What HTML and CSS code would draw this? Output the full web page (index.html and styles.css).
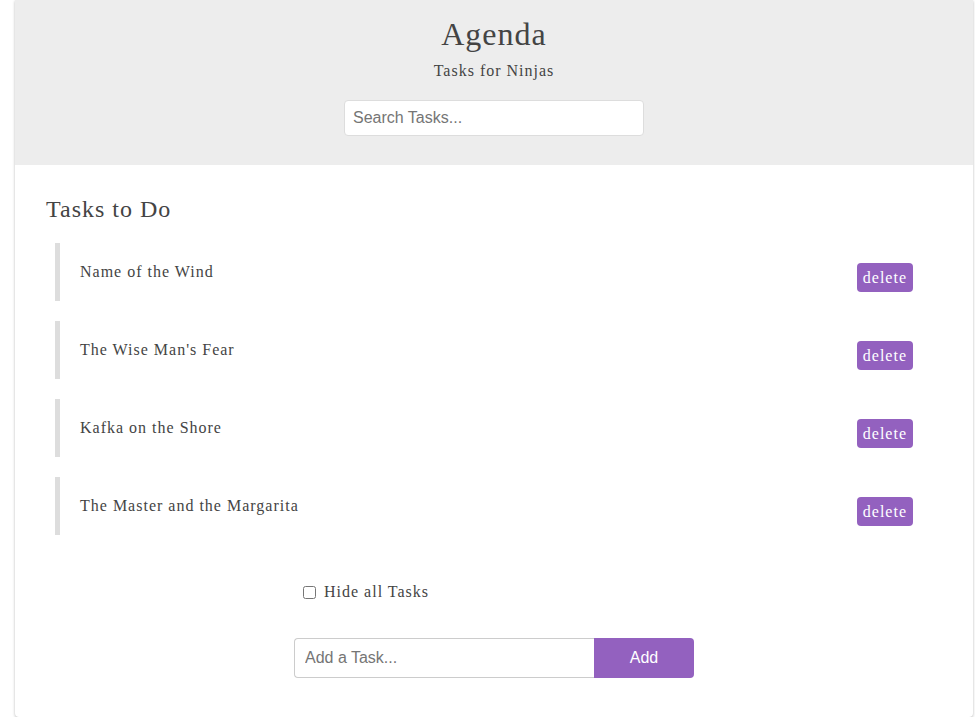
FILE: index.html
```html
<!DOCTYPE html>
<html lang="en">
<head>
<meta charset="utf-8">
<title>Agenda</title>
<link rel="stylesheet" href="styles.css">
</head>
<body>
<div class="wrapper">
  <header class="header">
    <h1 class="title">Agenda</h1>
    <p class="subtitle">Tasks for Ninjas</p>
    <form class="search">
      <input class="search-input" type="text" placeholder="Search Tasks...">
    </form>
  </header>
  <section class="tasks">
    <h2 class="tasks-title">Tasks to Do</h2>
    <ul class="task-list">
      <li class="task"><span class="task-name">Name of the Wind</span><button class="delete" type="button">delete</button></li>
      <li class="task"><span class="task-name">The Wise Man's Fear</span><button class="delete" type="button">delete</button></li>
      <li class="task"><span class="task-name">Kafka on the Shore</span><button class="delete" type="button">delete</button></li>
      <li class="task"><span class="task-name">The Master and the Margarita</span><button class="delete" type="button">delete</button></li>
    </ul>
    <div class="hide">
      <input class="hide-check" type="checkbox" id="hide">
      <label class="hide-label" for="hide">Hide all Tasks</label>
    </div>
    <form class="add">
      <input class="add-input" type="text" placeholder="Add a Task...">
      <button class="add-button" type="button">Add</button>
    </form>
  </section>
</div>
</body>
</html>
```
FILE: styles.css
```css
* {
  box-sizing: border-box;
}

html, body {
  margin: 0;
  padding: 0;
  background: #fff;
}

body {
  font-family: "Liberation Serif", "Times New Roman", serif;
  color: #444;
  letter-spacing: 1px;
}

.wrapper {
  width: 958px;
  height: 717px;
  margin-left: 15px;
  background: #fff;
  border-radius: 0 0 4px 4px;
  box-shadow: 0 1px 3px rgba(0, 0, 0, 0.28);
  overflow: hidden;
}

.header {
  height: 165px;
  background: #ededed;
  text-align: center;
  padding-top: 16px;
}

.title {
  margin: 0;
  font-size: 32px;
  line-height: 36px;
  font-weight: normal;
}

.subtitle {
  margin: 9px 0 0;
  font-size: 16px;
  line-height: 20px;
}

.search {
  margin-top: 19px;
  display: flex;
  justify-content: center;
}

.search-input {
  width: 300px;
  height: 36px;
  border: 1px solid #ddd;
  border-radius: 4px;
  padding: 0 8px;
  font-family: "Liberation Sans", Arial, sans-serif;
  font-size: 16px;
  letter-spacing: 0;
  color: #555;
  background: #fff;
  outline: none;
}

.search-input::placeholder,
.add-input::placeholder {
  color: #757575;
}

.tasks {
  padding: 30px 40px 0;
}

.tasks-title {
  margin: 0 0 20px -9px;
  font-size: 24px;
  line-height: 28px;
  font-weight: normal;
}

.task-list {
  list-style: none;
  margin: 0;
  padding: 0;
}

.task {
  display: flex;
  justify-content: space-between;
  align-items: flex-start;
  height: 58px;
  margin-bottom: 20px;
  padding: 20px;
  border-left: 5px solid #ddd;
  font-size: 16px;
  line-height: 18px;
}

.delete {
  height: 29px;
  padding: 0 6px;
  border: none;
  border-radius: 4px;
  background: #9361bf;
  color: #fff;
  font-family: inherit;
  font-size: 16px;
  letter-spacing: 1px;
  line-height: 29px;
  cursor: pointer;
}

.hide {
  width: 400px;
  margin: 47px auto 0;
  padding-left: 9px;
  display: flex;
  align-items: center;
  height: 20px;
}

.hide-check {
  width: 13px;
  height: 13px;
  margin: 0 8px 0 0;
}

.hide-label {
  font-size: 16px;
}

.add {
  width: 400px;
  margin: 36px auto 0;
  display: flex;
}

.add-input {
  flex: 1;
  height: 40px;
  border: 1px solid #ccc;
  border-right: none;
  border-radius: 4px 0 0 4px;
  padding: 0 10px;
  font-family: "Liberation Sans", Arial, sans-serif;
  font-size: 16px;
  letter-spacing: 0;
  outline: none;
}

.add-button {
  width: 100px;
  height: 40px;
  border: none;
  border-radius: 0 4px 4px 0;
  background: #9361bf;
  color: #fff;
  font-family: "Liberation Sans", Arial, sans-serif;
  font-size: 16px;
  letter-spacing: 0;
  cursor: pointer;
}
```
